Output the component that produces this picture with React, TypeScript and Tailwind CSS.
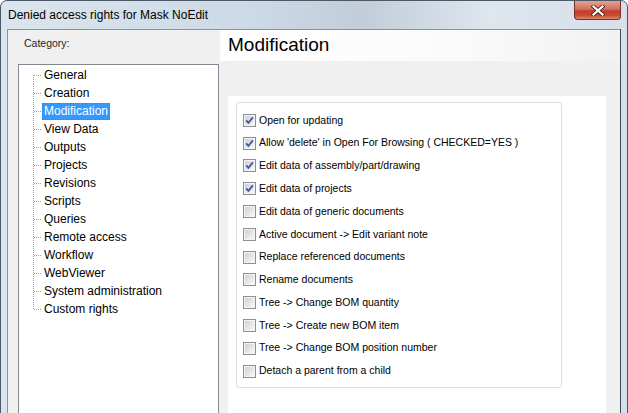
import { useId } from "react";

const categories = [
  "General",
  "Creation",
  "Modification",
  "View Data",
  "Outputs",
  "Projects",
  "Revisions",
  "Scripts",
  "Queries",
  "Remote access",
  "Workflow",
  "WebViewer",
  "System administration",
  "Custom rights",
];

const rights: [string, boolean][] = [
  ["Open for updating", true],
  ["Allow 'delete' in Open For Browsing ( CHECKED=YES )", true],
  ["Edit data of assembly/part/drawing", true],
  ["Edit data of projects", true],
  ["Edit data of generic documents", false],
  ["Active document -> Edit variant note", false],
  ["Replace referenced documents", false],
  ["Rename documents", false],
  ["Tree -> Change BOM quantity", false],
  ["Tree -> Create new BOM item", false],
  ["Tree -> Change BOM position number", false],
  ["Detach a parent from a child", false],
];

const CheckBox = ({ checked }: { checked: boolean }) => {
  const id = useId();
  return (
    <svg width="13" height="13" viewBox="0 0 13 13" className="shrink-0">
      <defs>
        <linearGradient id={id} x1="0" y1="0" x2="1" y2="1">
          <stop offset="0" stopColor="#cdd1d7" />
          <stop offset="1" stopColor="#f7f7f7" />
        </linearGradient>
      </defs>
      <rect x="0.5" y="0.5" width="12" height="12" fill="#f4f4f4" stroke="#8e8f8f" />
      <rect x="2" y="2" width="9" height="9" fill={`url(#${id})`} />
      {checked && (
        <path d="M3.2 6.4 L5.4 8.9 L9.9 3.4" fill="none" stroke="#3f58a0" strokeWidth="1.8" />
      )}
    </svg>
  );
};

const TreeLine = ({ first, last }: { first: boolean; last: boolean }) => (
  <svg width="9" height="18" className="shrink-0">
    <line
      x1="0.5"
      y1={first ? 9 : 0}
      x2="0.5"
      y2={last ? 10 : 18}
      stroke="#a0a0a0"
      strokeDasharray="1 1"
    />
    <line x1="1" y1="9.5" x2="9" y2="9.5" stroke="#a0a0a0" strokeDasharray="1 1" />
  </svg>
);

const CloseButton = () => (
  <div className="mr-[6px] flex h-[19px] w-[47px] items-center justify-center self-start rounded-b-[4px] border border-t-0 border-[#7a2e26] bg-[linear-gradient(180deg,#e2a393_0%,#d4715e_45%,#c0402a_55%,#c84a32_80%,#e08a6a_100%)]">
    <svg width="14" height="11" viewBox="0 0 14 11">
      <path d="M2.5 1.5 L11.5 9.5 M11.5 1.5 L2.5 9.5" stroke="#4d2a26" strokeWidth="4" strokeLinecap="square" />
      <path d="M2.5 1.5 L11.5 9.5 M11.5 1.5 L2.5 9.5" stroke="#ffffff" strokeWidth="2.2" strokeLinecap="square" />
    </svg>
  </div>
);

const App = () => {
  return (
    <div className="h-[413px] w-[628px] overflow-hidden bg-white font-['Liberation_Sans',Arial,sans-serif]">
      <div className="flex h-[440px] flex-col rounded-t-[7px] border border-[#4b5866] bg-[linear-gradient(90deg,#dbe5ef_0%,#ccd9e6_40%,#c2cdd9_58%,#dee6ee_78%,#d6e0ea_100%)]">
        {/* title bar */}
        <div className="flex h-[28px] shrink-0 items-start">
          <div className="flex-1 pl-[7px] pt-[6px] text-[12px] leading-[16px] text-black">
            Denied access rights for Mask NoEdit
          </div>
          <CloseButton />
        </div>

        <div className="flex flex-1 pl-[6px]">
          {/* client area */}
          <div className="flex w-[613px] border-l border-t border-[#8593a3] bg-[#f0f0f0]">
            {/* category tree */}
            <div className="flex w-[212px] shrink-0 flex-col">
              <div className="flex h-[28px] items-center pl-[16px] text-[10.5px] text-[#1e1e1e]">
                Category:
              </div>
              <div className="ml-[10px] mt-[6px] h-[360px] w-[201px] border border-[#828790] bg-white pt-[1px] pl-[14px]">
                {categories.map((c, i) => {
                  const selected = c === "Modification";
                  return (
                    <div key={c} className="flex h-[18px] items-center">
                      <TreeLine first={i === 0} last={i === categories.length - 1} />
                      <span
                        className={
                          selected
                            ? "h-[17px] border border-dotted border-[#b86a2a] bg-[#3399ff] px-[1px] text-[12px] leading-[15px] text-white"
                            : "h-[17px] border border-transparent px-[1px] text-[12px] leading-[15px] text-black"
                        }
                      >
                        {c}
                      </span>
                    </div>
                  );
                })}
              </div>
            </div>

            {/* detail panel */}
            <div className="flex flex-1 flex-col">
              <div className="flex h-[31px] items-center bg-[linear-gradient(90deg,#ffffff_0%,#fbfbfb_55%,#f2f2f2_100%)] pl-[8px] text-[19px] text-black">
                Modification
              </div>
              <div className="h-[35px]" />
              <div className="ml-[8px] mr-[14px] flex-1 bg-white pl-[8px] pt-[6px]">
                <div className="h-[286px] w-[326px] rounded-[3px] border border-[#d5dfe5] pl-[6px] pt-[6px]">
                  {rights.map(([label, checked]) => (
                    <div key={label} className="flex h-[22.8px] items-center gap-[3px]">
                      <CheckBox checked={checked} />
                      <span className="whitespace-nowrap text-[10.5px] text-black">{label}</span>
                    </div>
                  ))}
                </div>
              </div>
            </div>
          </div>

          {/* right frame */}
          <div className="w-[7px] border-l border-[#3f4a56]" />
        </div>
      </div>
    </div>
  );
};

export default App;
